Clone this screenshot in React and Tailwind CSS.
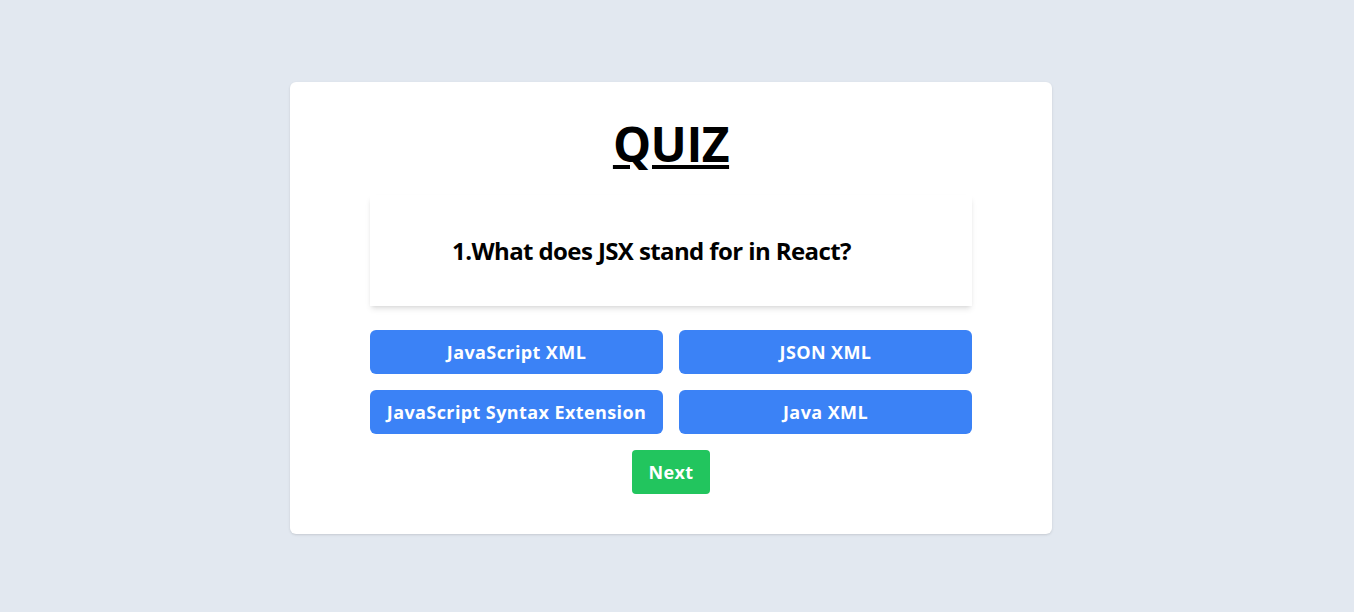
import React, { useState } from 'react';

const questions = [
  {
    question: 'What does JSX stand for in React?',
    options: ['JavaScript XML', 'JSON XML', 'JavaScript Syntax Extension', 'Java XML'],
  },
];

const App = () => {
  const [index] = useState(0);
  const current = questions[index];

  return (
    <div
      className="min-h-screen bg-[#e2e8f0] flex items-center justify-center pr-[12px] pt-[4px]"
      style={{ fontFamily: '"Open Sans", "Noto Sans", sans-serif' }}
    >
      <div className="w-[762px] bg-white rounded-md shadow-sm pt-[34px] pb-10 flex flex-col items-center">
        <h1 className="text-5xl font-bold underline text-black leading-[56px] tracking-[-0.5px]">QUIZ</h1>

        <div className="w-[602px] mt-[23px] shadow-md bg-white pl-[82px] pr-4 pt-10 pb-[39px]">
          <h2 className="text-2xl font-bold text-black leading-8 tracking-[-0.6px]">
            {index + 1}.{current.question}
          </h2>
        </div>

        <div className="w-[602px] grid grid-cols-2 gap-4 mt-6">
          {current.options.map((option, i) => (
            <button
              key={i}
              className="h-11 bg-[#3b82f6] text-white text-lg font-bold rounded-md tracking-[0.4px]"
            >
              {option}
            </button>
          ))}
        </div>

        <button className="mt-4 h-11 px-4 bg-[#22c55e] text-white text-lg font-bold rounded tracking-[0.4px]">
          Next
        </button>
      </div>
    </div>
  );
};

export default App;
